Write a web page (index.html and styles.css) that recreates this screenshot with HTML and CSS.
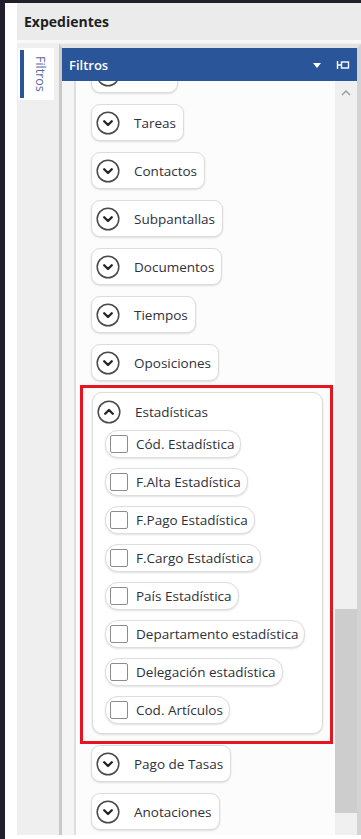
FILE: index.html
```html
<!DOCTYPE html>
<html lang="es">
<head>
  <meta charset="UTF-8" />
  <meta name="viewport" content="width=device-width, initial-scale=1.0"/>
  <title>Expedientes - Filtros</title>
  <link rel="stylesheet" href="styles.css">
</head>
<body>
  <div class="edge"></div>
  <div class="main">
    <div class="window">
      <div class="title">Expedientes</div>
      <div class="workspace">
        <div class="side">
          <div class="side-tab"><span>Filtros</span></div>
        </div>
        <div class="panel">
          <div class="panel-head">
            <span class="panel-title">Filtros</span>
            <svg class="head-icon" width="10" height="8" viewBox="0 0 10 8"><path d="M1 2 L9 2 L5 7 Z" fill="#fff"/></svg>
            <svg class="head-icon" width="14" height="10" viewBox="0 0 14 10"><path d="M1.5 1 V9 M1.5 5 H5.5" stroke="#fff" stroke-width="1.4" fill="none"/><rect x="5.5" y="2" width="7" height="6" fill="none" stroke="#fff" stroke-width="1.4"/></svg>
          </div>
          <div class="panel-body">
            <div class="list">
              <div class="list-inner">
                <div class="fold short"><svg class="chev" viewBox="0 0 24 24"><circle cx="12" cy="12" r="10.8"/><path d="M8.2 10.3 L12 14 L15.8 10.3"/></svg></div>
                <div class="fold"><svg class="chev" viewBox="0 0 24 24"><circle cx="12" cy="12" r="10.8"/><path d="M8.2 10.3 L12 14 L15.8 10.3"/></svg><span>Tareas</span></div>
                <div class="fold"><svg class="chev" viewBox="0 0 24 24"><circle cx="12" cy="12" r="10.8"/><path d="M8.2 10.3 L12 14 L15.8 10.3"/></svg><span>Contactos</span></div>
                <div class="fold"><svg class="chev" viewBox="0 0 24 24"><circle cx="12" cy="12" r="10.8"/><path d="M8.2 10.3 L12 14 L15.8 10.3"/></svg><span>Subpantallas</span></div>
                <div class="fold"><svg class="chev" viewBox="0 0 24 24"><circle cx="12" cy="12" r="10.8"/><path d="M8.2 10.3 L12 14 L15.8 10.3"/></svg><span>Documentos</span></div>
                <div class="fold"><svg class="chev" viewBox="0 0 24 24"><circle cx="12" cy="12" r="10.8"/><path d="M8.2 10.3 L12 14 L15.8 10.3"/></svg><span>Tiempos</span></div>
                <div class="fold"><svg class="chev" viewBox="0 0 24 24"><circle cx="12" cy="12" r="10.8"/><path d="M8.2 10.3 L12 14 L15.8 10.3"/></svg><span>Oposiciones</span></div>

                <div class="group">
                  <div class="group-head"><svg class="chev" viewBox="0 0 24 24"><circle cx="12" cy="12" r="10.8"/><path d="M8.2 13.7 L12 10 L15.8 13.7"/></svg><span>Estadísticas</span></div>
                  <div class="checks">
                    <label class="check"><span class="box"></span>Cód. Estadística</label>
                    <label class="check"><span class="box"></span>F.Alta Estadística</label>
                    <label class="check"><span class="box"></span>F.Pago Estadística</label>
                    <label class="check"><span class="box"></span>F.Cargo Estadística</label>
                    <label class="check"><span class="box"></span>País Estadística</label>
                    <label class="check"><span class="box"></span>Departamento estadística</label>
                    <label class="check"><span class="box"></span>Delegación estadística</label>
                    <label class="check"><span class="box"></span>Cod. Artículos</label>
                  </div>
                </div>

                <div class="fold"><svg class="chev" viewBox="0 0 24 24"><circle cx="12" cy="12" r="10.8"/><path d="M8.2 10.3 L12 14 L15.8 10.3"/></svg><span>Pago de Tasas</span></div>
                <div class="fold"><svg class="chev" viewBox="0 0 24 24"><circle cx="12" cy="12" r="10.8"/><path d="M8.2 10.3 L12 14 L15.8 10.3"/></svg><span>Anotaciones</span></div>
              </div>
            </div>
            <div class="scrollbar">
              <svg class="scroll-up" width="10" height="7" viewBox="0 0 10 7"><path d="M1 6 L5 2 L9 6" stroke="#9a9a9a" stroke-width="1.4" fill="none"/></svg>
              <div class="scroll-thumb"></div>
            </div>
          </div>
        </div>
      </div>
    </div>
  </div>
</body>
</html>
```

FILE: styles.css
```css
body { margin: 0; background: #fff; display: flex; height: 839px; overflow: hidden; font-family: "Open Sans", Arial, sans-serif; color: #2f313a; }
.edge { width: 5px; background: #221f2b; flex: none; }
.main { flex: 1; border-top: 3px solid #221f2b; padding-left: 12px; background: #fff; }
.window { height: 832px; background: #efefef; display: flex; flex-direction: column; }
.title { height: 37px; border-bottom: 3px solid #f8f8f8; background: #ebebeb; padding-left: 7px; font-weight: 700; font-size: 14px; line-height: 37px; color: #1e1e1e; }
.workspace { flex: 1; display: flex; min-height: 0; }

.side { width: 41px; flex: none; padding: 5px 0 0 1px; }
.side-tab { width: 36px; height: 52px; background: #fff; display: flex; align-items: center; }
.side-tab span { margin-left: 2px; border-left: 4px solid #2a5599; height: 48px; padding-left: 8px; writing-mode: vertical-rl; text-align: center; font-size: 12.5px; line-height: 16px; color: #5a68a2; }

.panel { flex: 1; margin-top: 1px; border-top: 4px solid #e3e3e3; border-left: 3px solid #c9c9c9; border-right: 4px solid #d3d3d3; display: flex; flex-direction: column; min-width: 0; }
.panel-head { height: 33px; background: #2a5599; color: #fff; display: flex; align-items: center; padding: 0 7px; flex: none; }
.panel-title { flex: 1; font-size: 13px; font-weight: 600; }
.head-icon { margin-left: 14px; }
.panel-body { flex: 1; display: flex; min-height: 0; background: #f5f5f5; }

.list { flex: 1; margin-left: 12px; border-left: 2px solid #dedede; background: #fcfcfc; overflow: hidden; padding-left: 15px; }
.list-inner { margin-top: -25px; display: flex; flex-direction: column; align-items: flex-start; gap: 11px; }

.fold, .group-head { height: 35px; display: flex; align-items: center; gap: 14px; padding: 0 7px 0 4px; font-size: 13.5px; }
.fold { background: #fff; border: 1px solid #dcdcdc; border-radius: 9px; box-shadow: 0 1px 2px rgba(0,0,0,0.12); }
.fold.short { width: 74px; }
.chev { width: 24px; height: 24px; flex: none; }
.chev circle { fill: #fff; stroke: #4a4a4a; stroke-width: 1.5; }
.chev path { fill: none; stroke: #222; stroke-width: 2.3; stroke-linecap: round; stroke-linejoin: round; }

.group { position: relative; width: 229px; margin-left: 1px; background: #fff; border: 1px solid #dcdcdc; border-radius: 10px; box-shadow: 0 1px 2px rgba(0,0,0,0.12); padding-bottom: 9px; }
.group::after { content: ""; position: absolute; top: -8px; left: -13px; right: -11px; bottom: -11px; border: 3px solid #e5161f; pointer-events: none; }
.group-head { height: 37px; }
.checks { display: flex; flex-direction: column; align-items: flex-start; gap: 10px; padding-left: 12px; }
.check { height: 26px; display: flex; align-items: center; gap: 8px; padding: 0 6px 0 4px; background: #fff; border: 1px solid #dedede; border-radius: 13px; box-shadow: 0 1px 2px rgba(0,0,0,0.12); font-size: 13.5px; white-space: nowrap; }
.box { width: 16px; height: 16px; border: 1px solid #8c8c8c; border-radius: 2px; background: #fff; }

.scrollbar { width: 22px; flex: none; background: #f0f0f0; display: flex; flex-direction: column; align-items: center; }
.scroll-up { margin-top: 8px; }
.scroll-thumb { width: 22px; height: 204px; margin-top: auto; margin-bottom: 22px; background: #cdcdcd; }
```
